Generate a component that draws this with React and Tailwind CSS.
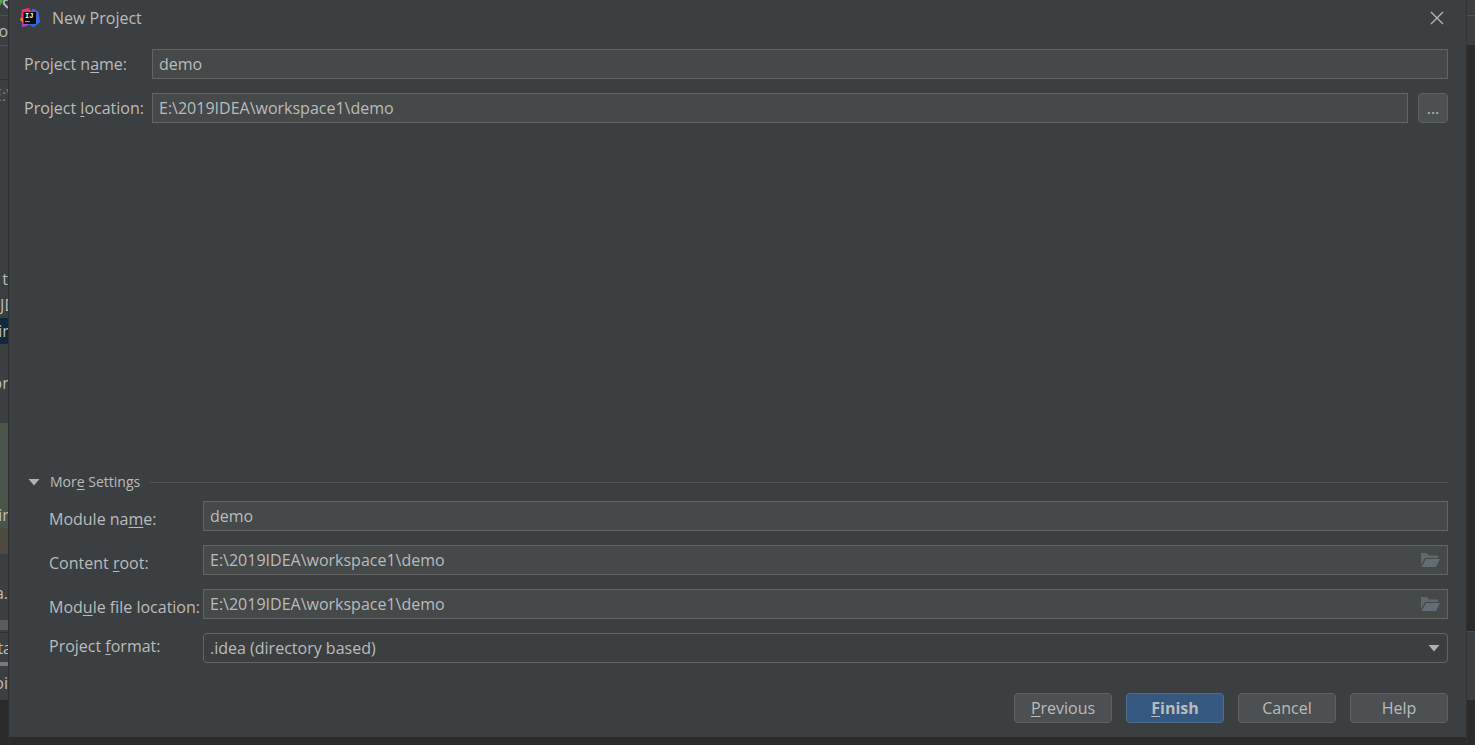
import React from "react";

function Mnemonic({ text, at, length = 1 }) {
  return (
    <>
      {text.slice(0, at)}
      <u className="underline decoration-1 underline-offset-2">{text.slice(at, at + length)}</u>
      {text.slice(at + length)}
    </>
  );
}

function IdeaLogo() {
  return (
    <svg viewBox="0 0 20 20" className="h-5 w-5" aria-hidden="true">
      <defs>
        <linearGradient id="idea-blue" x1="0" y1="0" x2="1" y2="1">
          <stop offset="0" stopColor="#7a4fc8" />
          <stop offset="0.45" stopColor="#4a5cd0" />
          <stop offset="1" stopColor="#2478ea" />
        </linearGradient>
        <linearGradient id="idea-pink" x1="0" y1="0" x2="1" y2="0.6">
          <stop offset="0" stopColor="#fe315d" />
          <stop offset="1" stopColor="#d8307a" />
        </linearGradient>
      </defs>
      <path d="M10 4 13 0.5 18.5 3.5 20 14 14 19 8 16Z" fill="url(#idea-blue)" />
      <path d="M2 13 9 16 8 17.5 2 19Z" fill="#a74ac7" />
      <path d="M0 11 3 8 4 15 1 13Z" fill="#fc801d" />
      <path d="M2 1.5 9 0 12 5 5 14 1 8Z" fill="url(#idea-pink)" />
      <path d="M8 16H16L13 19Z" fill="#2f68da" />
      <rect x="3.5" y="4" width="12.5" height="12" fill="#0a0a0a" />
      <text x="5" y="10" fontFamily="Liberation Mono, monospace" fontWeight="700" fontSize="7" fill="#fff">IJ</text>
      <rect x="5" y="13" width="5" height="1" fill="#a0a0a0" />
    </svg>
  );
}

function FolderIcon() {
  return (
    <svg viewBox="0 0 19 14" className="h-[14px] w-[19px]" aria-hidden="true">
      <path d="M0 0H6L8 2.5H17V5H4L0 12Z" fill="#5f686d" />
      <path d="M5 6H19L15 14H0.5Z" fill="#636e74" />
    </svg>
  );
}

function DownArrow() {
  return (
    <svg viewBox="0 0 12 7" className="h-[7px] w-3" aria-hidden="true">
      <path d="M0.5 0H11.5L6 6.5Z" fill="#afb1b3" />
    </svg>
  );
}

const fieldClass =
  "h-[30px] w-full min-w-0 border border-[#646464] bg-[#45494a] px-[6px] text-base text-[#bbbbbb] outline-none";

function DialogButton({ children, primary = false }) {
  return (
    <button
      type="button"
      className={
        primary
          ? "h-[30px] w-[98px] rounded border border-[#4c708c] bg-[#365880] font-bold text-[#bbbbbb]"
          : "h-[30px] w-[98px] rounded border border-[#5e6060] bg-[#4c5052] text-[#bbbbbb]"
      }
    >
      {children}
    </button>
  );
}

function ModuleRow({ id, label, at, length, value, browse }) {
  return (
    <>
      <label htmlFor={id} className="h-[30px] pt-1 leading-[28px] whitespace-nowrap">
        <Mnemonic text={label} at={at} length={length} />
      </label>
      <div className="relative">
        <input id={id} defaultValue={value} className={fieldClass} />
        {browse && (
          <button type="button" aria-label="Browse" className="absolute top-2 right-2">
            <FolderIcon />
          </button>
        )}
      </div>
    </>
  );
}

function Strip({ className = "", children }) {
  return (
    <div className={"flex shrink-0 items-center justify-end overflow-hidden whitespace-nowrap " + className}>
      {children}
    </div>
  );
}

function Covered({ children, wide = false }) {
  return <span className={wide ? "-mr-2" : "-mr-1"}>{children}</span>;
}

function LeftEdge() {
  return (
    <div className="flex w-[9px] shrink-0 flex-col overflow-hidden border-r border-[#2e3031] bg-[#3c3f41] text-base text-[#bbbbbb]">
      <Strip className="h-[15px]">
        <svg viewBox="0 0 8 15" className="h-[15px] w-2" aria-hidden="true">
          <path d="M0 0H3L0 6Z" fill="#57a64a" />
          <path d="M8 0A3 3 0 0 0 4 4L8 8" fill="none" stroke="#aeb9c0" strokeWidth="2" />
        </svg>
      </Strip>
      <Strip className="h-[31px] border-y border-[#515151]">o</Strip>
      <Strip className="h-[34px] border-b border-[#2f3132]" />
      <Strip className="h-[30px] text-[#808080]">
        <Covered>E:\</Covered>
      </Strip>
      <Strip className="h-[156px]" />
      <Strip className="h-[26px]">
        <Covered>ti</Covered>
      </Strip>
      <Strip className="h-[26px]">
        <Covered wide>JD</Covered>
      </Strip>
      <Strip className="h-[26px] bg-[#0d293e]">
        <Covered>in</Covered>
      </Strip>
      <Strip className="h-[26px]" />
      <Strip className="h-[26px]">
        <Covered>on</Covered>
      </Strip>
      <Strip className="h-[27px]" />
      <Strip className="h-[79px] bg-[#49544a]" />
      <Strip className="h-[26px] bg-[#49544a]">
        <Covered>in</Covered>
      </Strip>
      <Strip className="h-[26px] bg-[#4f4b41]" />
      <Strip className="h-[26px]" />
      <Strip className="h-[26px]">a.</Strip>
      <Strip className="h-[14px]" />
      <Strip className="h-[10px] bg-[#595b5d]" />
      <Strip className="h-[3px] border-b border-[#2f3132]" />
      <Strip className="h-[29px]">
        <Covered>ta</Covered>
      </Strip>
      <Strip className="h-1 bg-[#747a80]" />
      <Strip className="h-[34px]">oi</Strip>
      <div className="flex-1 bg-[#2b2b2b]" />
    </div>
  );
}

function RightEdge() {
  return (
    <div className="flex w-[9px] shrink-0 flex-col border-l border-[#303233] bg-[#2b2b2b]">
      <div className="h-4 border-b border-[#515151] bg-[#3c3f41]" />
      <div className="h-[29px] bg-[#3c3f41]" />
      <div className="h-[586px]" />
      <div className="h-[69px] border-t border-[#4b4d4e] bg-[#3c3f41]" />
    </div>
  );
}

export default function App() {
  return (
    <div className="flex min-h-screen bg-[#2b2b2b] font-['Open_Sans','Noto_Sans',sans-serif] text-base text-[#bbbbbb]">
      <LeftEdge />
      <main className="mb-2 flex min-w-0 flex-1 flex-col bg-[#3c3f41] pr-[18px] pb-[14px] pl-[15px]">
        <header className="-ml-1 flex h-9 items-center gap-3">
          <IdeaLogo />
          <h1 className="flex-1">New Project</h1>
          <button type="button" aria-label="Close" className="mr-1">
            <svg viewBox="0 0 14 14" className="h-[14px] w-[14px]" aria-hidden="true">
              <path d="M1 1 13 13M13 1 1 13" stroke="#bbbbbb" strokeWidth="1.2" />
            </svg>
          </button>
        </header>

        <section className="mt-[13px] grid grid-cols-[128px_1fr] items-center gap-y-[14px]">
          <label htmlFor="project-name">
            <Mnemonic text="Project name:" at={9} />
          </label>
          <input id="project-name" defaultValue="demo" className={fieldClass} />
          <label htmlFor="project-location" className="whitespace-nowrap">
            <Mnemonic text="Project location:" at={8} />
          </label>
          <div className="flex gap-[10px]">
            <input id="project-location" defaultValue={"E:\\2019IDEA\\workspace1\\demo"} className={fieldClass} />
            <button
              type="button"
              aria-label="Browse project location"
              className="h-[30px] w-[30px] shrink-0 rounded border border-[#5e6060] bg-[#4c5052]"
            >
              ...
            </button>
          </div>
        </section>

        <section className="mt-auto">
          <button type="button" aria-expanded="true" className="flex w-full items-center gap-[10px] pl-1 text-sm">
            <DownArrow />
            <span>
              <Mnemonic text="More Settings" at={3} />
            </span>
            <span className="h-px flex-1 bg-[#515355]" />
          </button>
          <div className="mt-[9px] grid grid-cols-[154px_1fr] gap-y-[14px] pl-[25px]">
            <ModuleRow id="module-name" label="Module name:" at={9} value="demo" />
            <ModuleRow id="content-root" label="Content root:" at={8} value={"E:\\2019IDEA\\workspace1\\demo"} browse />
            <ModuleRow
              id="module-location"
              label="Module file location:"
              at={3}
              value={"E:\\2019IDEA\\workspace1\\demo"}
              browse
            />
            <label htmlFor="project-format" className="leading-[26px]">
              <Mnemonic text="Project format:" at={8} />
            </label>
            <div className="relative">
              <select
                id="project-format"
                className="h-[30px] w-full appearance-none rounded border border-[#646464] bg-[#3c3f41] px-[6px] text-base text-[#bbbbbb] outline-none"
              >
                <option>.idea (directory based)</option>
              </select>
              <span className="pointer-events-none absolute inset-y-0 right-2 flex items-center">
                <DownArrow />
              </span>
            </div>
          </div>
        </section>

        <footer className="mt-[30px] flex justify-end gap-[14px]">
          <DialogButton>
            <Mnemonic text="Previous" at={0} />
          </DialogButton>
          <DialogButton primary>
            <Mnemonic text="Finish" at={0} />
          </DialogButton>
          <DialogButton>Cancel</DialogButton>
          <DialogButton>Help</DialogButton>
        </footer>
      </main>
      <RightEdge />
    </div>
  );
}
